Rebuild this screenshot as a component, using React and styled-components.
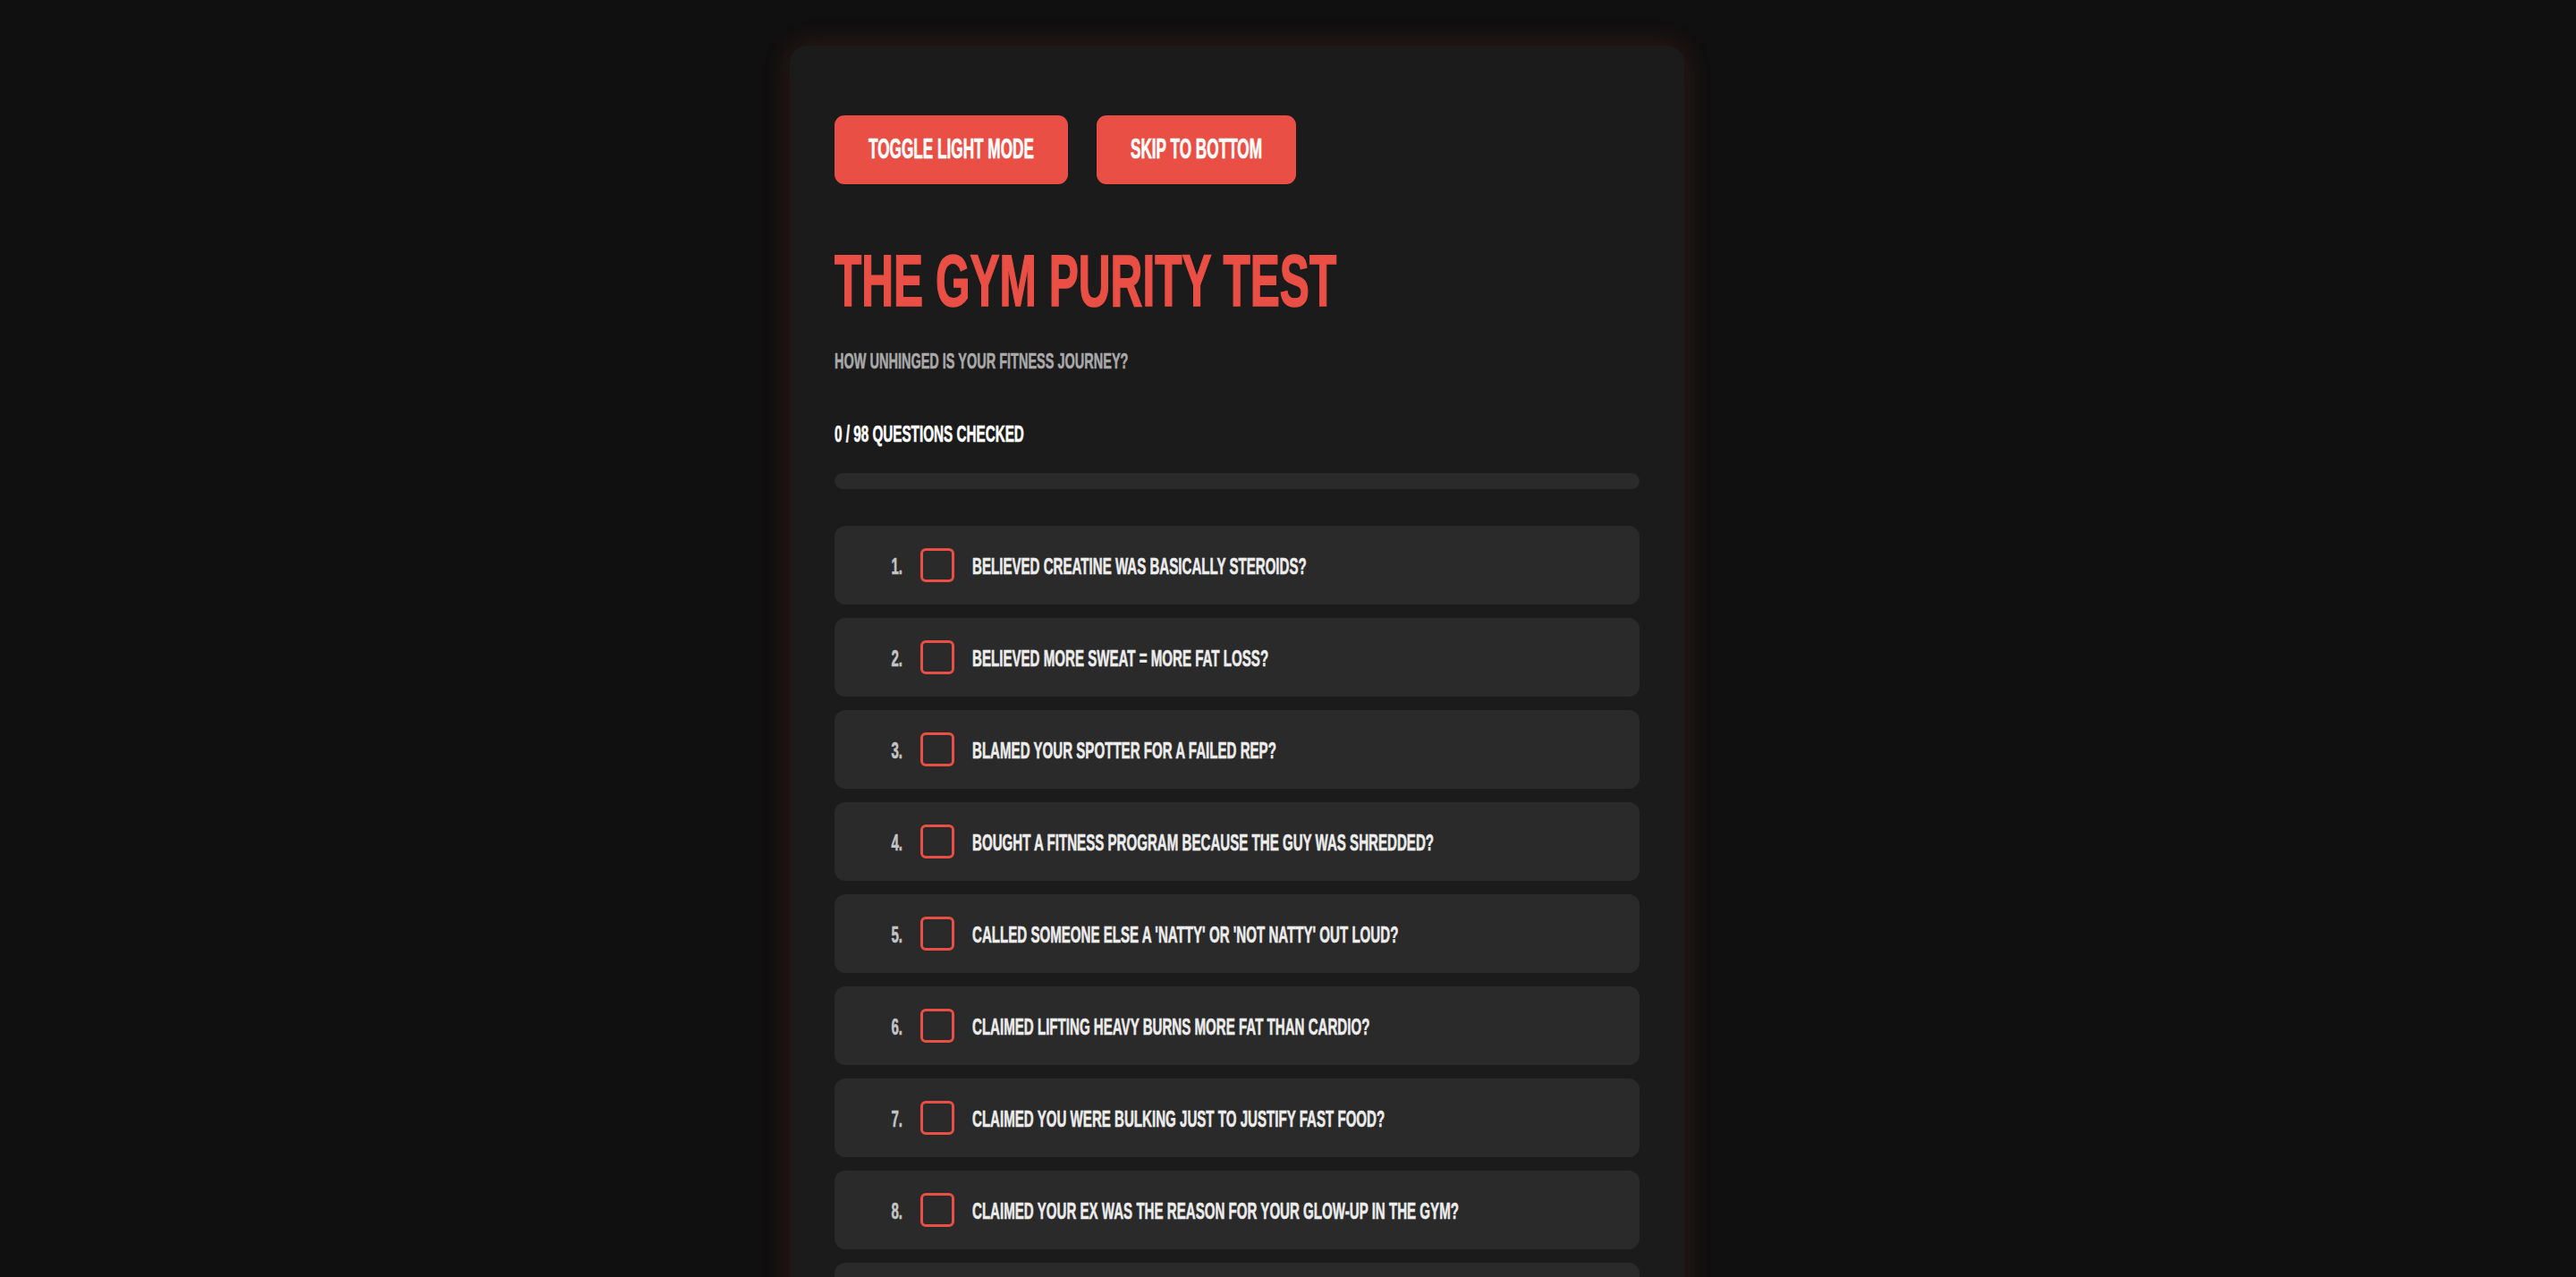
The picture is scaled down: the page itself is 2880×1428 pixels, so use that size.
import React, { useState } from "react";
import styled, { createGlobalStyle } from "styled-components";

const GlobalStyle = createGlobalStyle`
  html, body {
    margin: 0;
    background: #101010;
  }
  body {
    font-family: "Liberation Sans", Arial, sans-serif;
    font-weight: 700;
    text-transform: uppercase;
    color: #eeeeee;
    -webkit-text-stroke: 0.35px currentColor;
  }
`;

// no condensed display face here, so a small sans gets stretched upward
const Page = styled.div`
  display: flex;
  justify-content: center;
  min-height: 100vh;
  padding: 51px 114px 60px 0;
  box-sizing: border-box;
`;

const Card = styled.main`
  width: 1000px;
  box-sizing: border-box;
  padding: 78px 50px 50px;
  background: #1b1b1b;
  border-radius: 20px;
  box-shadow: 0 0 32px rgba(231, 76, 60, 0.16);
`;

const Toolbar = styled.div`
  display: flex;
  gap: 32px;
`;

const Button = styled.button`
  height: 77px;
  padding: 0 38px;
  border: none;
  border-radius: 11px;
  background: #e94f45;
  color: #ffffff;
  font-family: inherit;
  font-weight: 700;
  font-size: 17.2px;
  text-transform: uppercase;
  -webkit-text-stroke: 0.4px currentColor;
  cursor: pointer;
  span {
    display: inline-block;
    transform: scaleY(1.78);
  }
`;

const Title = styled.h1`
  margin: 68px 0 0;
  font-size: 49.6px;
  line-height: 80px;
  color: #e94f45;
  -webkit-text-stroke: 1px currentColor;
  transform: scaleY(1.63);
`;

const Subtitle = styled.p`
  margin: 38px 0 0;
  font-size: 14.5px;
  line-height: 24px;
  color: #a9a9a9;
  transform: scaleY(1.67);
`;

const Counter = styled.div`
  margin-top: 58px;
  font-size: 15.25px;
  line-height: 24px;
  color: #ffffff;
  transform: scaleY(1.66);
`;

const Track = styled.div`
  margin-top: 31px;
  height: 18px;
  border-radius: 9px;
  background: #2a2a2a;
  overflow: hidden;
`;

const Fill = styled.div`
  height: 100%;
  background: #e94f45;
`;

const List = styled.ol`
  list-style: none;
  margin: 41px 0 0;
  padding: 0;
  display: flex;
  flex-direction: column;
  gap: 15px;
`;

const Item = styled.li`
  display: flex;
  align-items: center;
  gap: 20px;
  height: 88px;
  padding: 0 20px;
  border-radius: 12px;
  background: #2a2a2a;
`;

const Num = styled.span`
  width: 56px;
  text-align: right;
  font-size: 15.1px;
  color: #c4c4c4;
  transform: scaleY(1.67);
`;

const Box = styled.span`
  width: 38px;
  height: 38px;
  box-sizing: border-box;
  flex-shrink: 0;
  border: 3px solid #e94f45;
  border-radius: 6px;
  background: ${(p) => (p.$on ? "#e94f45" : "transparent")};
  cursor: pointer;
`;

const Text = styled.span`
  font-size: 15.1px;
  color: #ececec;
  transform: scaleY(1.67);
`;

const questions = [
  "Believed creatine was basically steroids?",
  "Believed more sweat = more fat loss?",
  "Blamed your spotter for a failed rep?",
  "Bought a fitness program because the guy was shredded?",
  "Called someone else a 'natty' or 'not natty' out loud?",
  "Claimed lifting heavy burns more fat than cardio?",
  "Claimed you were bulking just to justify fast food?",
  "Claimed your ex was the reason for your glow-up in the gym?",
  "Cried after a leg day?",
  "Curled in the squat rack?",
  "Did cardio only to eat more dessert?",
  "Dry scooped pre-workout?",
];

export default function App() {
  const [checked, setChecked] = useState({});
  const count = Object.values(checked).filter(Boolean).length;

  return (
    <>
      <GlobalStyle />
      <Page>
        <Card>
          <Toolbar>
            <Button>
              <span>Toggle Light Mode</span>
            </Button>
            <Button>
              <span>Skip to Bottom</span>
            </Button>
          </Toolbar>
          <Title>The Gym Purity Test</Title>
          <Subtitle>How unhinged is your fitness journey?</Subtitle>
          <Counter>{count} / 98 questions checked</Counter>
          <Track>
            <Fill style={{ width: `${(count / 98) * 100}%` }} />
          </Track>
          <List>
            {questions.map((q, i) => (
              <Item key={q}>
                <Num>{i + 1}.</Num>
                <Box
                  $on={checked[i]}
                  onClick={() => setChecked({ ...checked, [i]: !checked[i] })}
                />
                <Text>{q}</Text>
              </Item>
            ))}
          </List>
        </Card>
      </Page>
    </>
  );
}
